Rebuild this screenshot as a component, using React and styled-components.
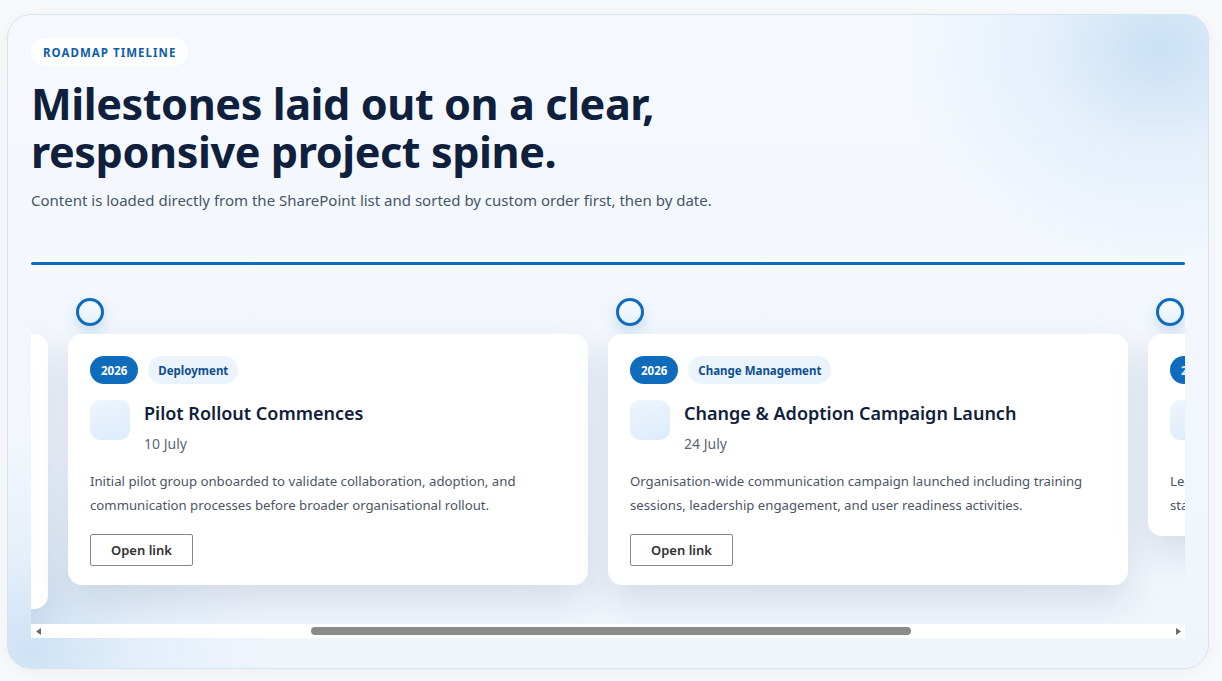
import React, { useLayoutEffect, useRef, useState } from 'react';
import styled, { createGlobalStyle } from 'styled-components';

const GlobalStyle = createGlobalStyle`
    html, body {
        margin: 0;
        padding: 0;
        background: #f8f9fa;
    }
    body {
        font-family: "Segoe UI", "Noto Sans", "Open Sans", sans-serif;
        color: #0f203c;
    }
`;

const Page = styled.div`
    padding: 14px 13px 12px 7px;
`;

const Panel = styled.section`
    position: relative;
    box-sizing: border-box;
    height: 655px;
    padding: 23px 23px 0 23px;
    border: 1px solid #d5e4f3;
    border-radius: 24px;
    overflow: hidden;
    background:
        radial-gradient(ellipse 260px 220px at 96% 5%, rgba(190, 218, 243, 0.8) 0, rgba(205, 226, 246, 0.4) 45%, rgba(243, 248, 253, 0) 100%),
        radial-gradient(ellipse 240px 200px at 2% 97%, rgba(196, 222, 244, 0.8) 0, rgba(205, 226, 246, 0.35) 45%, rgba(243, 248, 253, 0) 100%),
        linear-gradient(180deg, #f5f9fe 0%, #f0f5fc 100%);
    box-shadow: 0 4px 18px rgba(20, 50, 90, 0.05);
`;

const Eyebrow = styled.span`
    display: inline-flex;
    align-items: center;
    height: 28px;
    padding: 0 12px;
    border-radius: 14px;
    background: rgba(255, 255, 255, 0.85);
    color: #0f5ea8;
    font-size: 11.5px;
    font-weight: 700;
    letter-spacing: 0.09em;
`;

const Heading = styled.h1`
    margin: 14px 0 0;
    max-width: 700px;
    font-size: 43.2px;
    line-height: 48px;
    font-weight: 700;
    letter-spacing: -0.01em;
    color: #0f203c;
`;

const Subtitle = styled.p`
    margin: 13px 0 0;
    font-size: 15px;
    line-height: 22px;
    color: #475569;
`;

const Spine = styled.div`
    margin-top: 51px;
    height: 3px;
    border-radius: 2px;
    background: #0f6cbd;
    box-shadow: 0 0 0 6px rgba(255, 255, 255, 0.45);
`;

const Track = styled.div`
    display: flex;
    align-items: flex-start;
    gap: 20px;
    margin-top: 15px;
    padding: 18px 13px 15px;
    overflow: hidden;
`;

const Item = styled.div`
    flex: 0 0 520px;
    display: flex;
    flex-direction: column;
`;

const Dot = styled.span`
    box-sizing: border-box;
    width: 28px;
    height: 28px;
    margin-left: 8px;
    border-radius: 50%;
    border: 3px solid #0f6cbd;
    background: linear-gradient(180deg, #f7fbff, #e6f0fb);
    box-shadow: 0 6px 14px rgba(15, 108, 189, 0.18);
`;

const Card = styled.article`
    margin-top: 8px;
    padding: 22px 22px 19px;
    background: #fff;
    border-radius: 14px;
    box-shadow: 0 16px 36px rgba(20, 45, 85, 0.12);
`;

const Tags = styled.div`
    display: flex;
    gap: 10px;
`;

const Pill = styled.span`
    display: inline-flex;
    align-items: center;
    height: 28px;
    padding: 0 ${p => (p.$primary ? '11px' : '10px')};
    border-radius: 14px;
    font-size: 11.5px;
    font-weight: 700;
    background: ${p => (p.$primary ? '#0f6cbd' : '#ebf3fc')};
    color: ${p => (p.$primary ? '#fff' : '#0f4f8f')};
`;

const Head = styled.div`
    display: flex;
    gap: 14px;
    margin-top: 16px;
`;

const IconTile = styled.div`
    flex: 0 0 40px;
    height: 40px;
    border-radius: 10px;
    background: linear-gradient(160deg, #eef5fd 0%, #dcebfb 100%);
`;

const Title = styled.h2`
    margin: 0;
    font-size: 18px;
    line-height: 26px;
    font-weight: 600;
    color: #0f203c;
`;

const DateText = styled.div`
    margin-top: 8px;
    font-size: 14px;
    line-height: 20px;
    color: #5b6577;
`;

const Description = styled.p`
    margin: 15px 0 0;
    font-size: 13.2px;
    line-height: 24px;
    color: #4a5568;
`;

const LinkButton = styled.a`
    display: inline-flex;
    align-items: center;
    justify-content: center;
    box-sizing: border-box;
    height: 32px;
    margin-top: 17px;
    padding: 0 20px;
    border: 1px solid #8a8886;
    border-radius: 2px;
    background: #fff;
    color: #323130;
    font-size: 13px;
    font-weight: 600;
    text-decoration: none;
`;

const ScrollBar = styled.div`
    display: flex;
    align-items: center;
    height: 14px;
    background: #fff;
`;

const ArrowButton = styled.span`
    flex: 0 0 14px;
    display: flex;
    align-items: center;
    justify-content: center;
    height: 14px;
    color: #6b6b6b;
`;

const ThumbRail = styled.div`
    position: relative;
    flex: 1;
    height: 100%;
`;

const Thumb = styled.span`
    position: absolute;
    top: 3px;
    height: 8px;
    border-radius: 4px;
    background: #8b8b8b;
`;

const Arrow = ({ dir }) => (
    <svg width="5" height="7" viewBox="0 0 5 7">
        {dir === 'left'
            ? <path d="M5 0 L0 3.5 L5 7 Z" fill="currentColor" />
            : <path d="M0 0 L5 3.5 L0 7 Z" fill="currentColor" />}
    </svg>
);

const milestones = [
    {
        year: '2026',
        tag: 'Planning',
        title: 'Programme Mobilisation & Planning',
        date: '26 June',
        text: 'Project team, governance board and delivery plan confirmed, with key stakeholders briefed on scope, timelines and success measures for each phase of the programme.',
        link: true,
    },
    {
        year: '2026',
        tag: 'Deployment',
        title: 'Pilot Rollout Commences',
        date: '10 July',
        text: 'Initial pilot group onboarded to validate collaboration, adoption, and communication processes before broader organisational rollout.',
        link: true,
    },
    {
        year: '2026',
        tag: 'Change Management',
        title: 'Change & Adoption Campaign Launch',
        date: '24 July',
        text: 'Organisation-wide communication campaign launched including training sessions, leadership engagement, and user readiness activities.',
        link: true,
    },
    {
        year: '2026',
        tag: 'Governance',
        title: 'Go-Live Readiness Review',
        date: '14 August',
        text: 'Leadership review of pilot outcomes, adoption metrics and open risks, stakeholder sign-off confirmed ahead of go-live.',
        link: false,
    },
];

export default function App() {
    const trackRef = useRef(null);
    const [thumb, setThumb] = useState({ left: 269, width: 600 });

    useLayoutEffect(() => {
        const el = trackRef.current;
        if (!el) return;
        el.scrollLeft = 516;
        const rail = el.clientWidth - 28;
        setThumb({
            left: (rail * el.scrollLeft) / el.scrollWidth - 2,
            width: (rail * el.clientWidth) / el.scrollWidth,
        });
    }, []);

    return (
        <Page>
            <GlobalStyle />
            <Panel>
                <Eyebrow>ROADMAP TIMELINE</Eyebrow>
                <Heading>Milestones laid out on a clear, responsive project spine.</Heading>
                <Subtitle>
                    Content is loaded directly from the SharePoint list and sorted by custom order first, then by date.
                </Subtitle>
                <Spine />
                <Track ref={trackRef}>
                    {milestones.map(m => (
                        <Item key={m.title}>
                            <Dot />
                            <Card>
                                <Tags>
                                    <Pill $primary>{m.year}</Pill>
                                    <Pill>{m.tag}</Pill>
                                </Tags>
                                <Head>
                                    <IconTile />
                                    <div>
                                        <Title>{m.title}</Title>
                                        <DateText>{m.date}</DateText>
                                    </div>
                                </Head>
                                <Description>{m.text}</Description>
                                {m.link && <LinkButton href="#">Open link</LinkButton>}
                            </Card>
                        </Item>
                    ))}
                </Track>
                <ScrollBar>
                    <ArrowButton><Arrow dir="left" /></ArrowButton>
                    <ThumbRail>
                        <Thumb style={{ left: thumb.left, width: thumb.width }} />
                    </ThumbRail>
                    <ArrowButton><Arrow dir="right" /></ArrowButton>
                </ScrollBar>
            </Panel>
        </Page>
    );
}
